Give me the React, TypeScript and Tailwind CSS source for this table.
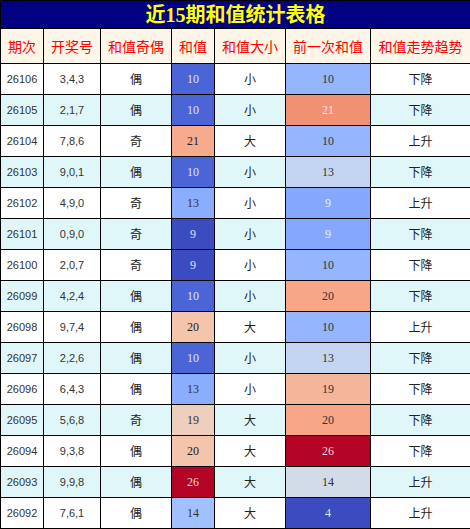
import React from "react";

type Cell = { v: number; bg: string; fg: string };

// heat colours for the sum columns (coolwarm style)
const rows: {
  no: string;
  nums: string;
  odd: string;
  sum: Cell;
  size: string;
  prev: Cell;
  trend: string;
}[] = [
  { no: "26106", nums: "3,4,3", odd: "偶", sum: { v: 10, bg: "#4b65d6", fg: "#dfe3f5" }, size: "小", prev: { v: 10, bg: "#94b6ff", fg: "#333" }, trend: "下降" },
  { no: "26105", nums: "2,1,7", odd: "偶", sum: { v: 10, bg: "#4b65d6", fg: "#dfe3f5" }, size: "小", prev: { v: 21, bg: "#f19073", fg: "#fbeee8" }, trend: "下降" },
  { no: "26104", nums: "7,8,6", odd: "奇", sum: { v: 21, bg: "#f7aa8c", fg: "#222" }, size: "大", prev: { v: 10, bg: "#94b6ff", fg: "#333" }, trend: "上升" },
  { no: "26103", nums: "9,0,1", odd: "偶", sum: { v: 10, bg: "#4b65d6", fg: "#dfe3f5" }, size: "小", prev: { v: 13, bg: "#c4d5f3", fg: "#333" }, trend: "下降" },
  { no: "26102", nums: "4,9,0", odd: "奇", sum: { v: 13, bg: "#8badfd", fg: "#333" }, size: "小", prev: { v: 9, bg: "#85a8fc", fg: "#e8edfb" }, trend: "上升" },
  { no: "26101", nums: "0,9,0", odd: "奇", sum: { v: 9, bg: "#3b4cc0", fg: "#dfe3f5" }, size: "小", prev: { v: 9, bg: "#85a8fc", fg: "#e8edfb" }, trend: "下降" },
  { no: "26100", nums: "2,0,7", odd: "奇", sum: { v: 9, bg: "#3b4cc0", fg: "#dfe3f5" }, size: "小", prev: { v: 10, bg: "#94b6ff", fg: "#333" }, trend: "下降" },
  { no: "26099", nums: "4,2,4", odd: "偶", sum: { v: 10, bg: "#4b65d6", fg: "#dfe3f5" }, size: "小", prev: { v: 20, bg: "#f7a788", fg: "#333" }, trend: "下降" },
  { no: "26098", nums: "9,7,4", odd: "偶", sum: { v: 20, bg: "#f5c4ac", fg: "#222" }, size: "大", prev: { v: 10, bg: "#94b6ff", fg: "#333" }, trend: "上升" },
  { no: "26097", nums: "2,2,6", odd: "偶", sum: { v: 10, bg: "#4b65d6", fg: "#dfe3f5" }, size: "小", prev: { v: 13, bg: "#c4d5f3", fg: "#333" }, trend: "下降" },
  { no: "26096", nums: "6,4,3", odd: "偶", sum: { v: 13, bg: "#8badfd", fg: "#333" }, size: "小", prev: { v: 19, bg: "#f4b69a", fg: "#333" }, trend: "下降" },
  { no: "26095", nums: "5,6,8", odd: "奇", sum: { v: 19, bg: "#eecfbe", fg: "#333" }, size: "大", prev: { v: 20, bg: "#f7a788", fg: "#333" }, trend: "下降" },
  { no: "26094", nums: "9,3,8", odd: "偶", sum: { v: 20, bg: "#f5c4ac", fg: "#222" }, size: "大", prev: { v: 26, bg: "#b40426", fg: "#f3d6dc" }, trend: "下降" },
  { no: "26093", nums: "9,9,8", odd: "偶", sum: { v: 26, bg: "#b40426", fg: "#f3d6dc" }, size: "大", prev: { v: 14, bg: "#d2dbe8", fg: "#333" }, trend: "上升" },
  { no: "26092", nums: "7,6,1", odd: "偶", sum: { v: 14, bg: "#a1c0ff", fg: "#333" }, size: "大", prev: { v: 4, bg: "#3b4cc0", fg: "#dfe3f5" }, trend: "上升" },
];

const heads = ["期次", "开奖号", "和值奇偶", "和值", "和值大小", "前一次和值", "和值走势趋势"];

const cjk = { fontFamily: '"Noto Sans CJK SC", "Noto Sans", sans-serif' };
const sans = { fontFamily: '"Liberation Sans", Arial, sans-serif' };
const serif = { fontFamily: '"Liberation Serif", "Times New Roman", serif' };

export default function App() {
  return (
    <div className="w-[470px] h-[529px] bg-white overflow-hidden">
      <table className="w-[470px] table-fixed border-collapse text-center">
        <colgroup>
          <col className="w-[43px]" />
          <col className="w-[57px]" />
          <col className="w-[71px]" />
          <col className="w-[43px]" />
          <col className="w-[71px]" />
          <col className="w-[85px]" />
          <col className="w-[100px]" />
        </colgroup>
        <thead>
          <tr className="h-[28px]">
            <th
              colSpan={7}
              className="border border-black bg-[#000080] p-0 text-[20px] font-bold leading-none text-[#ffff00]"
              style={{ fontFamily: '"Liberation Serif", "Noto Sans CJK SC", serif' }}
            >
              近15期和值统计表格
            </th>
          </tr>
          <tr className="h-[35px] bg-[#fdf5e7]">
            {heads.map((h) => (
              <th
                key={h}
                className="border border-black p-0 text-[14px] font-normal text-[#ff0000]"
                style={cjk}
              >
                {h}
              </th>
            ))}
          </tr>
        </thead>
        <tbody>
          {rows.map((r, i) => (
            <tr key={r.no} className={i % 2 === 0 ? "h-[31px] bg-white" : "h-[31px] bg-[#e0f7f9]"}>
              <td className="border border-black p-0 text-[11px] text-[#333]" style={sans}>
                {r.no}
              </td>
              <td className="border border-black p-0 text-[11px] text-[#333]" style={sans}>
                {r.nums}
              </td>
              <td className="border border-black p-0 text-[12px] text-[#222]" style={cjk}>
                {r.odd}
              </td>
              <td
                className="border border-black p-0 text-[12px]"
                style={{ ...serif, backgroundColor: r.sum.bg, color: r.sum.fg }}
              >
                {r.sum.v}
              </td>
              <td className="border border-black p-0 text-[12px] text-[#222]" style={cjk}>
                {r.size}
              </td>
              <td
                className="border border-black p-0 text-[12px]"
                style={{ ...serif, backgroundColor: r.prev.bg, color: r.prev.fg }}
              >
                {r.prev.v}
              </td>
              <td className="border border-black p-0 text-[12px] text-[#222]" style={cjk}>
                {r.trend}
              </td>
            </tr>
          ))}
        </tbody>
      </table>
    </div>
  );
}
